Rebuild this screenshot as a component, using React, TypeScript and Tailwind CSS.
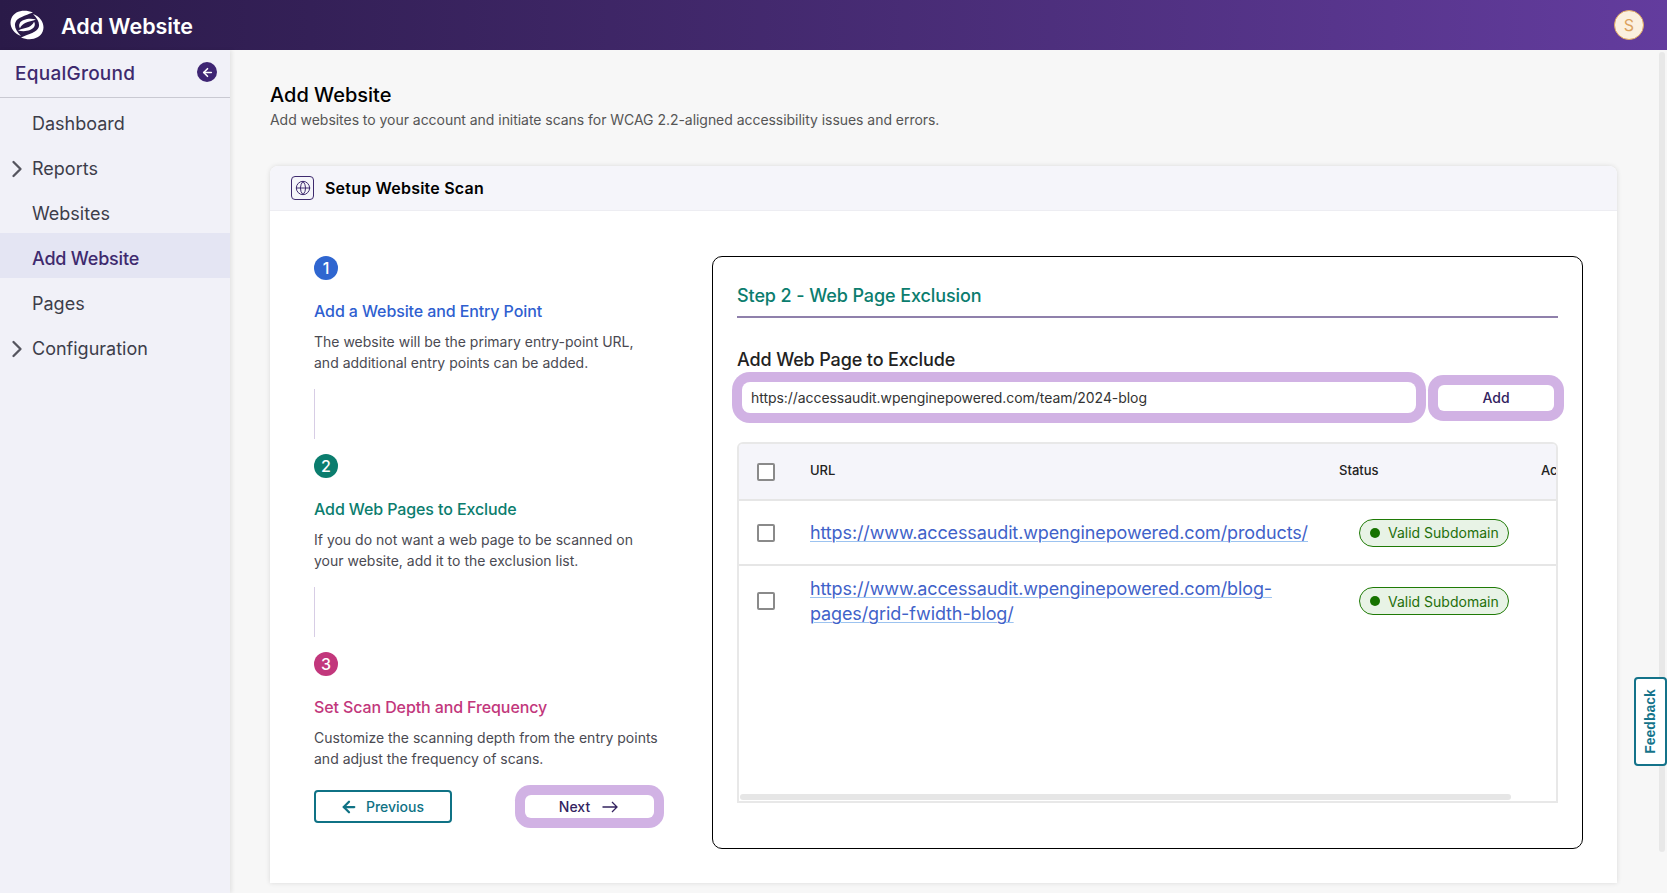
import { ArrowLeft, ChevronRight, Globe } from 'lucide-react';

const NAV = [
  { label: 'Dashboard' },
  { label: 'Reports', arrow: true },
  { label: 'Websites' },
  { label: 'Add Website', active: true },
  { label: 'Pages' },
  { label: 'Configuration', arrow: true },
];

const STEPS = [
  {
    n: 1,
    circle: 'bg-[#2f66d0]',
    title: 'text-[#2f5fd0]',
    name: 'Add a Website and Entry Point',
    lines: ['The website will be the primary entry-point URL,', 'and additional entry points can be added.'],
  },
  {
    n: 2,
    circle: 'bg-[#0b7d6e]',
    title: 'text-[#0b7d6e]',
    name: 'Add Web Pages to Exclude',
    lines: ['If you do not want a web page to be scanned on', 'your website, add it to the exclusion list.'],
  },
  {
    n: 3,
    circle: 'bg-[#c2377c]',
    title: 'text-[#c2377c]',
    name: 'Set Scan Depth and Frequency',
    lines: ['Customize the scanning depth from the entry points', 'and adjust the frequency of scans.'],
  },
];

function Logo() {
  const half = (
    <>
      <path d="M23 2.6C14.5 -1 4.5 0.8 1.4 8.2C-1.4 15 2.5 23 11 26C6.6 21.6 3.8 16.8 5.4 12.4C7 8 15 5.6 23 2.6Z" />
      <path d="M26 9.6C19.5 7.8 12 9.4 9.8 13.2C8.8 15 9 16.8 10 18.2C11 15.8 12.8 14.2 15.2 13C18 11.8 22.6 11.2 26 9.6Z" />
    </>
  );
  return (
    <svg viewBox="0 0 34 30" className="h-[30px] w-[34px]" fill="#fff">
      {half}
      <g transform="rotate(180 17 15)">{half}</g>
    </svg>
  );
}

function Checkbox() {
  return <span className="block h-[18px] w-[18px] shrink-0 rounded-[2px] border-2 border-[#8a8a8a] bg-white" />;
}

function Badge() {
  return (
    <span className="flex h-[28px] w-[150px] items-center gap-[8px] rounded-full border border-[#1f7a06] bg-[#e8f3e6] pl-[10px] text-[14px] text-[#1f6f0a]">
      <span className="h-[10px] w-[10px] rounded-full bg-[#177300]" />
      Valid Subdomain
    </span>
  );
}

function Link({ children }: { children: React.ReactNode }) {
  return (
    <a className="text-[18px] leading-[25px] tracking-[-0.12px] text-[#3f62c9] underline decoration-[#9cc3f0] decoration-1 underline-offset-2">
      {children}
    </a>
  );
}

export default function App() {
  return (
    <div className="relative flex h-[893px] w-full flex-col overflow-hidden bg-[#f7f7f7] font-['Inter',sans-serif]">
      {/* Top bar */}
      <header className="flex h-[50px] shrink-0 items-center bg-gradient-to-r from-[#2a1a48] to-[#633c9e] pr-[23px] pl-[10px]">
        <Logo />
        <h1 className="mt-[2px] ml-[17px] text-[21.5px] font-semibold text-white">Add Website</h1>
        <span className="ml-auto flex h-[30px] w-[30px] items-center justify-center rounded-full border border-[#e0a860] bg-[#fbf0df] text-[16px] text-[#dba25d]">
          S
        </span>
      </header>

      <div className="flex min-h-0 flex-1">
        {/* Sidebar */}
        <aside className="z-10 w-[230px] shrink-0 bg-[#f1f1f8] shadow-[2px_0_4px_rgba(0,0,0,0.08)]">
          <div className="flex h-[48px] items-center justify-between border-b border-[#c9c9d2] pr-[13px] pl-[15px]">
            <span className="pt-[2px] text-[19px] font-medium tracking-[0.25px] text-[#3e2a6e]">EqualGround</span>
            <span className="mb-[3px] flex h-[20px] w-[20px] items-center justify-center rounded-full bg-[#3e2573]">
              <ArrowLeft className="h-[13px] w-[13px] text-white" strokeWidth={3} />
            </span>
          </div>
          <nav>
            {NAV.map(item => (
              <div
                key={item.label}
                className={`relative flex h-[45px] items-center pt-[6px] pl-[32px] text-[18px] ${
                  item.active ? 'bg-[#e4e5f3] font-medium tracking-[-0.2px] text-[#3e2a6e]' : 'text-[#3d3d4a]'
                }`}
              >
                {item.arrow && (
                  <ChevronRight className="absolute left-[3px] h-[28px] w-[28px] text-[#55555f]" strokeWidth={2} />
                )}
                {item.label}
              </div>
            ))}
          </nav>
        </aside>

        {/* Main */}
        <main className="min-w-0 flex-1 pt-[33px] pr-[50px] pl-[40px]">
          <h2 className="text-[20px] leading-[24px] font-medium text-black">Add Website</h2>
          <p className="mt-[2px] text-[14px] leading-[21px] tracking-[-0.04px] text-[#555]">
            Add websites to your account and initiate scans for WCAG 2.2-aligned accessibility issues and errors.
          </p>

          <section className="mt-[36px] h-[717px] rounded-t-[8px] bg-white shadow-[0_0_5px_rgba(0,0,0,0.12)]">
            <div className="flex h-[45px] items-center rounded-t-[8px] border-b border-[#ededf2] bg-[#f5f5fa] pl-[21px]">
              <span className="flex h-[24px] w-[23px] items-center justify-center rounded-[4px] border border-[#3e2a6e]">
                <Globe className="h-[16px] w-[16px] text-[#3e2a6e]" strokeWidth={1.5} />
              </span>
              <span className="ml-[11px] pb-[1px] text-[16px] font-semibold tracking-[0.21px] text-black">
                Setup Website Scan
              </span>
            </div>

            <div className="flex pt-[45px] pl-[44px]">
              {/* Steps column */}
              <div className="w-[398px] shrink-0">
                {STEPS.map((step, i) => (
                  <div key={step.n}>
                    <span
                      className={`flex h-[24px] w-[24px] items-center justify-center rounded-full text-[16px] font-medium text-white ${step.circle}`}
                    >
                      {step.n}
                    </span>
                    <div className={`mt-[19px] text-[16px] leading-[24px] font-medium tracking-[-0.11px] ${step.title}`}>
                      {step.name}
                    </div>
                    <p className="mt-[8px] text-[14px] leading-[21px] text-[#4a4a52]">
                      {step.lines[0]}
                      <br />
                      {step.lines[1]}
                    </p>
                    {i < 2 && <div className="mt-[16px] mb-[15px] h-[50px] w-px bg-[#d7cde5]" />}
                  </div>
                ))}
                <div className="mt-[21px] flex items-center pr-[58px]">
                  <button className="flex h-[33px] w-[138px] items-center justify-center gap-[8px] rounded-[4px] border-2 border-[#0f7285] bg-white pr-[2px] text-[14px] font-medium text-[#0f7285]">
                    <ArrowLeft className="h-[18px] w-[18px]" strokeWidth={3} />
                    Previous
                  </button>
                  <button className="ml-auto flex h-[23px] w-[129px] items-center justify-center gap-[12px] rounded-[6px] bg-white pr-[2px] text-[14px] font-medium text-[#33235f] shadow-[0_0_0_10px_#d1b2e4]">
                    Next
                    <svg viewBox="0 0 16 12" className="h-[12px] w-[16px]" fill="none" stroke="currentColor" strokeWidth="1.3">
                      <path d="M0.5 6H15M10 1l5 5-5 5" />
                    </svg>
                  </button>
                </div>
              </div>

              {/* Step 2 panel */}
              <div className="h-[593px] w-[871px] shrink-0 rounded-[10px] border-[1.5px] border-black px-[24px]">
                <div className="flex h-[61px] items-end border-b-2 border-[#8f80ab] pb-[6px] text-[18px] leading-[28px] font-medium tracking-[-0.1px] text-[#0b7d6e]">
                  Step 2 - Web Page Exclusion
                </div>
                <div className="mt-[29px] text-[18px] leading-[26px] font-medium tracking-[-0.13px] text-[#222]">
                  Add Web Page to Exclude
                </div>
                <div className="mt-[9px] flex items-center">
                  <div className="ml-[5px] flex h-[31px] w-[674px] items-center rounded-[8px] bg-white pl-[9px] text-[14px] tracking-[-0.06px] text-[#333] shadow-[0_0_0_10px_#d1b2e4]">
                    https://accessaudit.wpenginepowered.com/team/2024-blog
                  </div>
                  <button className="ml-[22px] flex h-[26px] w-[116px] items-center justify-center rounded-[6px] bg-white text-[14px] font-medium text-[#33235f] shadow-[0_0_0_10px_#d1b2e4]">
                    Add
                  </button>
                </div>

                <div className="relative mt-[29px] h-[361px] overflow-hidden rounded-t-[6px] border-2 border-[#e8e8e8]">
                  <div className="flex h-[57px] items-center border-b-2 border-[#e6e6e6] bg-[#f5f5fa] pl-[18px] text-[13px] font-medium text-[#222]">
                    <Checkbox />
                    <span className="mb-[2px] ml-[35px] w-[529px] shrink-0">URL</span>
                    <span className="mb-[2px] w-[202px] shrink-0">Status</span>
                    <span className="mb-[2px] shrink-0">Actions</span>
                  </div>
                  <div className="flex h-[65px] items-center border-b-2 border-[#e6e6e6] pl-[18px]">
                    <Checkbox />
                    <div className="ml-[35px] w-[549px] shrink-0">
                      <Link>https://www.accessaudit.wpenginepowered.com/products/</Link>
                    </div>
                    <Badge />
                  </div>
                  <div className="flex h-[70px] items-center pl-[18px]">
                    <Checkbox />
                    <div className="ml-[35px] w-[549px] shrink-0 pr-[30px]">
                      <Link>
                        https://www.accessaudit.wpenginepowered.com/blog-
                        <br />
                        pages/grid-fwidth-blog/
                      </Link>
                    </div>
                    <Badge />
                  </div>
                  <div className="absolute bottom-[1px] left-[1px] h-[6px] w-[771px] rounded-full bg-[#e6e6e6]" />
                </div>
              </div>
            </div>
          </section>
        </main>
      </div>

      {/* Page scrollbar */}
      <div className="absolute top-[52px] right-[2px] h-[800px] w-[6px] rounded-full bg-[#e8e8e8]" />

      {/* Feedback tab */}
      <div className="absolute top-[677px] right-0 flex h-[89px] w-[33px] items-center justify-center rounded-[4px] border-2 border-[#14738a] bg-white">
        <span className="-rotate-90 font-['Liberation_Sans',sans-serif] text-[14px] font-bold whitespace-nowrap text-[#14738a]">
          Feedback
        </span>
      </div>
    </div>
  );
}
